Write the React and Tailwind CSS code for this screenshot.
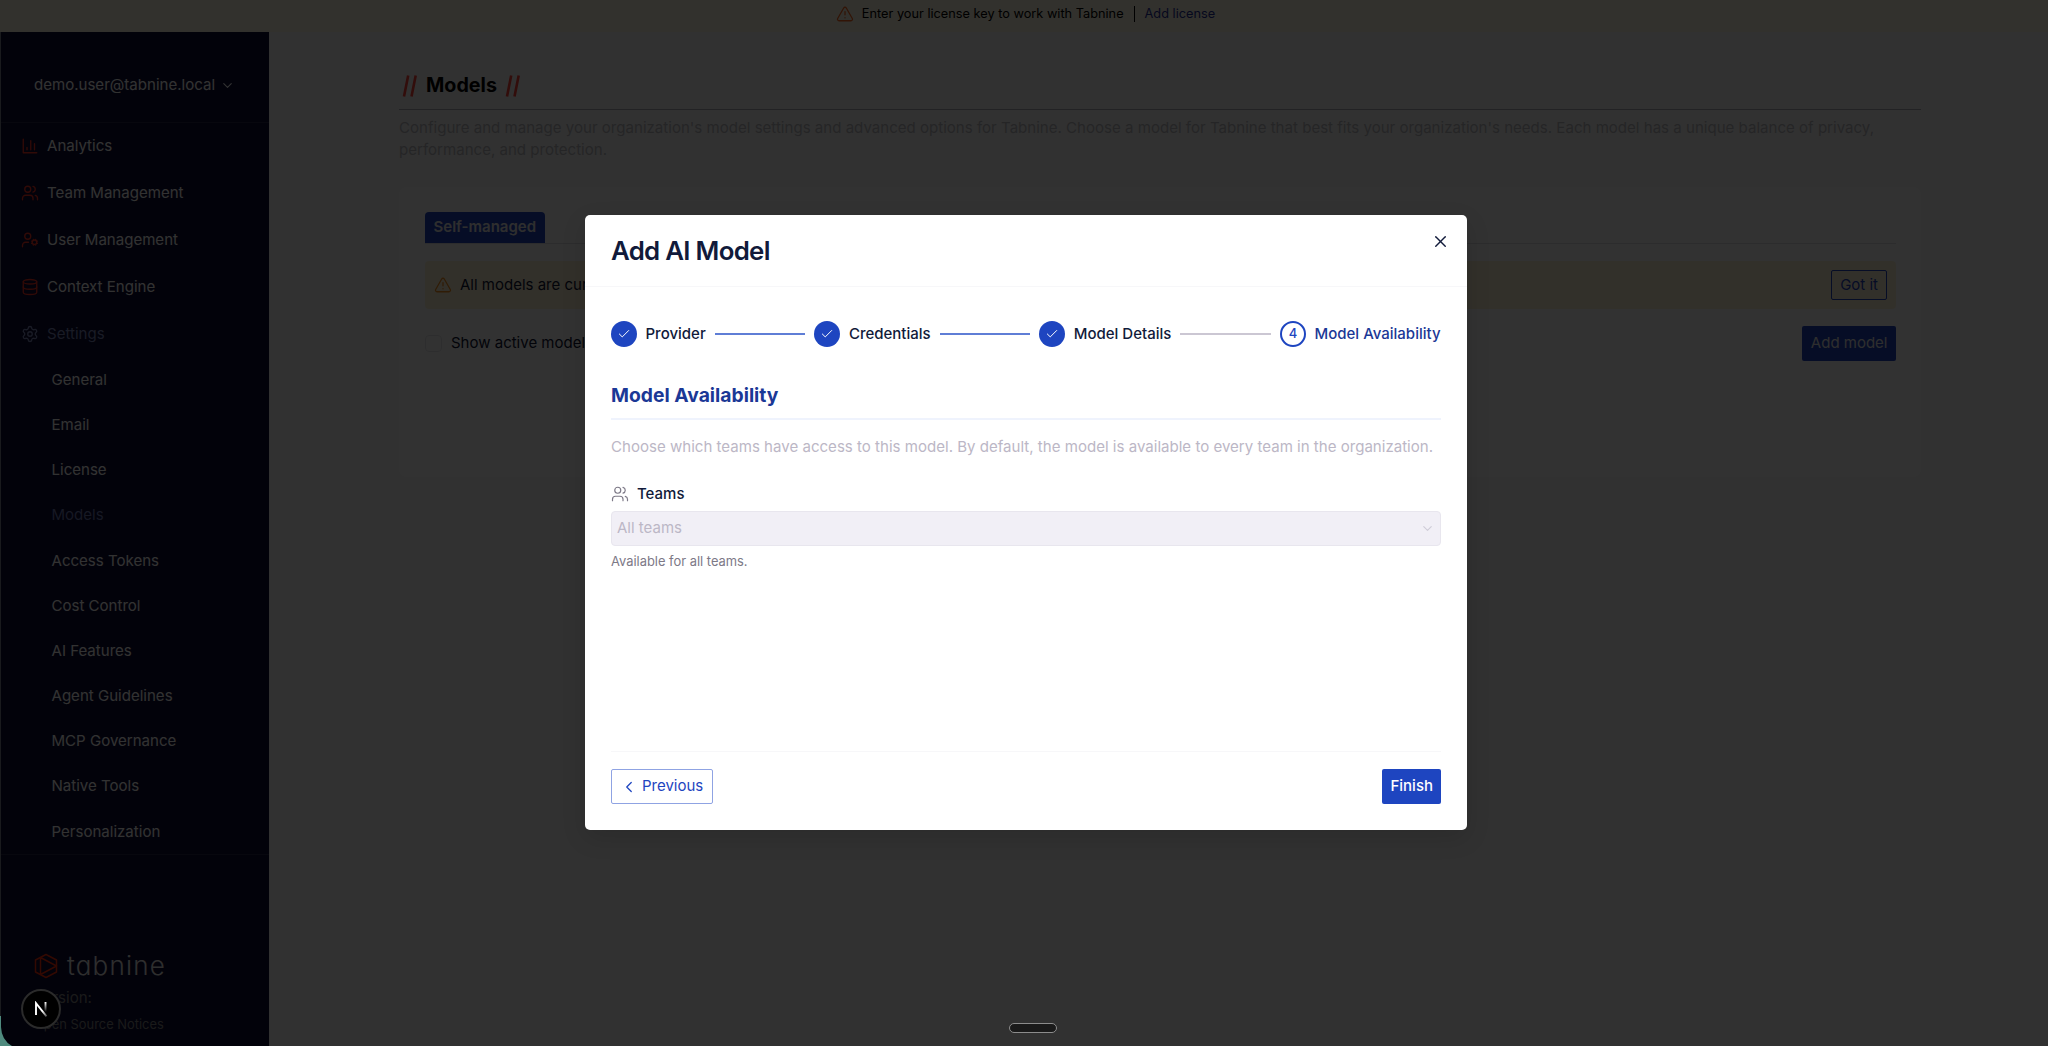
import React from "react";
import { AlertTriangle, Check, ChevronDown, ChevronLeft, Database, Settings, UserCog, Users, X } from "lucide-react";

const BarChartIcon = ({ size, strokeWidth, className }) => (
  <svg
    width={size}
    height={size}
    viewBox="0 0 24 24"
    fill="none"
    stroke="currentColor"
    strokeWidth={strokeWidth}
    strokeLinecap="round"
    strokeLinejoin="round"
    className={className}
  >
    <path d="M3 3v18h18" />
    <path d="M18 17V9M13 17V5M8 17v-3" />
  </svg>
);

const mainNav = [
  { label: "Analytics", icon: BarChartIcon },
  { label: "Team Management", icon: Users },
  { label: "User Management", icon: UserCog },
  { label: "Context Engine", icon: Database },
];

const settingsNav = [
  "General",
  "Email",
  "License",
  "Models",
  "Access Tokens",
  "Cost Control",
  "AI Features",
  "Agent Guidelines",
  "MCP Governance",
  "Native Tools",
  "Personalization",
];

const Logo = () => (
  <div className="flex items-center gap-[9px] text-[#e6e6e6]">
    <svg width="24" height="26" viewBox="0 0 24 26" fill="none" stroke="#fa2d0a" strokeWidth="1.5" strokeLinejoin="round">
      <path d="M12 1.5 22.5 7v12L12 24.5 1.5 19V7z" />
      <path d="M6.5 4.5v17M6.5 4.5 22.5 13 6.5 21.5" />
    </svg>
    <span className="font-light text-[26px] leading-[30px] tracking-[1.2px] [font-feature-settings:'cv11']">tabnine</span>
  </div>
);

const Sidebar = () => {
  return (
    <aside className="w-[269px] shrink-0 bg-[#0a0a32] text-[#fafafa] flex flex-col text-[15.06px] border-l border-[#7d8291]">
      <div className="h-[91px] shrink-0 pl-[33px] pt-[42px] flex items-start gap-[5px] border-b border-[#232346]">
        <span className="leading-[22px]">demo.user@tabnine.local</span>
        <ChevronDown size={15} strokeWidth={1.8} className="mt-1" />
      </div>
      <nav className="h-[732px] shrink-0 border-b border-[#232346]">
        {mainNav.map(({ label, icon: Icon }) => (
          <div key={label} className="h-[47px] pl-5 pb-px flex items-center gap-2">
            <Icon size={18} strokeWidth={1.8} className="text-[#f03223]" />
            <span>{label}</span>
          </div>
        ))}
        <div className="h-[47px] pl-5 pb-px flex items-center gap-2 text-[#7d87b9]">
          <Settings size={18} strokeWidth={1.8} />
          <span>Settings</span>
        </div>
        {settingsNav.map((item) => (
          <div
            key={item}
            className={
              item === "Models"
                ? "h-[45.2px] pl-[50.5px] pb-px flex items-center text-[#6e78af]"
                : "h-[45.2px] pl-[50.5px] pb-px flex items-center"
            }
          >
            {item}
          </div>
        ))}
      </nav>
      <div className="pl-[33px] pt-[96px] text-[#828282]">
        <Logo />
        <div className="mt-[6px] leading-[22px]">Version:</div>
        <div className="mt-[7px] text-[12.9px] leading-[18px]">Open Source Notices</div>
      </div>
    </aside>
  );
};

const Slashes = () => (
  <svg width="16" height="22" viewBox="0 0 16 22" stroke="#fa4137" strokeWidth="2.6">
    <path d="M2 21.5 6.2.5M9.5 21.5 13.7.5" />
  </svg>
);

const ModelsPage = () => {
  return (
    <main className="flex-1 bg-[#f5f5f5] pl-[130px] pr-[127px] pt-[41px] text-[15px]">
      <div className="h-[37px] flex items-start gap-2 pl-[3px] border-b border-[#aaaab4]">
        <div className="flex items-center gap-2 h-[26px]">
          <Slashes />
          <h1 className="text-[19.7px] font-bold text-black">Models</h1>
          <Slashes />
        </div>
      </div>
      <p className="mt-[7px] text-[15.07px] leading-[21.5px] text-[#b9b9be]">
        Configure and manage your organization's model settings and advanced options for Tabnine. Choose a model for
        Tabnine that best fits your organization's needs. Each model has a unique balance of privacy, performance, and
        protection.
      </p>
      <section className="mt-[27px] h-[290px] rounded-lg bg-[#fafafa] pl-[26px] pr-[25px] pt-[25px]">
        <div className="border-b border-[#dcdce1] flex">
          <div className="h-[31px] px-[8.5px] flex items-center rounded-t bg-[#1e41be] text-[#e6e6e6] font-semibold">
            Self-managed
          </div>
        </div>
        <div className="mt-[17px] h-[48px] rounded bg-[#faf0d2] flex items-center justify-between px-[9px] text-[#0f1432]">
          <div className="flex items-center gap-2">
            <AlertTriangle size={18} strokeWidth={1.7} className="text-[#f08c1e]" />
            <span>All models are currently available</span>
          </div>
          <button className="h-[30px] px-2 rounded-[2px] border border-[#1e41be] text-[#1e41be]">Got it</button>
        </div>
        <div className="mt-[17px] flex items-center justify-between text-[#0f1432]">
          <div className="flex items-center gap-[9px]">
            <span className="size-[17px] rounded border border-[#e1e1e6]" />
            <span>Show active models only</span>
          </div>
          <button className="h-[35px] px-[8.5px] rounded-[2px] bg-[#1e41be] text-[#e6e6e6]">Add model</button>
        </div>
      </section>
    </main>
  );
};

const Step = ({ label, number, active }) => (
  <div className="flex items-center gap-[8.5px] shrink-0">
    {active ? (
      <span className="size-[26px] rounded-full border-2 border-[#1e45c0] text-[#1e45c0] text-[13px] font-medium flex items-center justify-center">
        {number}
      </span>
    ) : (
      <span className="size-[26px] rounded-full bg-[#1e45c0] text-white flex items-center justify-center">
        <Check size={14} strokeWidth={1.7} />
      </span>
    )}
    <span className={active ? "font-medium text-[#1b3896]" : "font-medium text-[#111a3a]"}>{label}</span>
  </div>
);

const AddModelDialog = () => {
  return (
    <div className="w-[882px] h-[615px] mt-[215px] ml-[4px] rounded-[5px] bg-white shadow-[0_8px_24px_rgba(0,0,0,0.12)] flex flex-col text-[15px] text-[#111a3a]">
      <div className="h-[72px] shrink-0 pl-[26px] pr-[17px] border-b border-[#f7f7f9] flex justify-between">
        <h2 className="pt-[17px] text-[25.8px] leading-[38px] font-semibold tracking-[-0.7px]">Add AI Model</h2>
        <X size={19} strokeWidth={1.8} className="mt-[17px]" />
      </div>
      <div className="px-[26px] flex-1 flex flex-col">
        <div className="mt-[34px] mr-[0.5px] flex items-center gap-[9px]">
          <Step label="Provider" />
          <span className="h-[1.5px] flex-1 bg-[#5f7ed6]" />
          <Step label="Credentials" />
          <span className="h-[1.5px] flex-1 bg-[#5f7ed6]" />
          <Step label="Model Details" />
          <span className="h-[1.5px] flex-1 bg-[#cbc7d3]" />
          <Step label="Model Availability" number="4" active />
        </div>
        <h3 className="mt-[33px] pb-[8px] text-[19.3px] leading-[30px] font-bold text-[#1b3896] border-b-2 border-[#eff3fd]">
          Model Availability
        </h3>
        <p className="mt-4 text-[15.07px] leading-[22px] text-[#bcb7c6]">
          Choose which teams have access to this model. By default, the model is available to every team in the organization.
        </p>
        <div className="mt-[25px] flex items-center gap-2 leading-[22px] font-medium">
          <Users size={18} strokeWidth={1.6} className="text-[#7d7987]" />
          Teams
        </div>
        <div className="mt-[6px] h-[35px] pl-[5px] pr-[5px] pb-px rounded border border-[#e8e6ee] bg-[#f1eff6] flex items-center justify-between text-[#bcb7c6]">
          All teams
          <ChevronDown size={15} strokeWidth={1.8} className="text-[#cfccd8]" />
        </div>
        <div className="mt-[7px] text-[12.9px] leading-[18px] text-[#7d7987]">Available for all teams.</div>
        <div className="mt-auto h-[79px] border-t border-[#f7f7f9] pt-[17px] flex items-start justify-between">
          <button className="h-[35px] pl-2 pr-[9px] rounded-[2px] border border-[#8fa3e3] text-[#1e45c0] flex items-center gap-1">
            <ChevronLeft size={18} strokeWidth={1.7} />
            Previous
          </button>
          <button className="h-[35px] px-[8px] rounded-[2px] bg-[#1e45c0] text-white font-medium">Finish</button>
        </div>
      </div>
    </div>
  );
};

const DevBadge = () => (
  <div className="absolute left-[21px] bottom-[17px] size-10 rounded-full bg-black border-2 border-[#2b2b2b] flex items-center justify-center">
    <svg width="14" height="16" viewBox="0 0 14 16" fill="none" strokeWidth="1.9">
      <defs>
        <linearGradient id="badgeDiagonal" x1="2" y1="2" x2="13" y2="15" gradientUnits="userSpaceOnUse">
          <stop offset="0.6" stopColor="white" />
          <stop offset="1" stopColor="white" stopOpacity="0.3" />
        </linearGradient>
        <linearGradient id="badgeStem" x1="11.5" y1="1" x2="11.5" y2="11" gradientUnits="userSpaceOnUse">
          <stop stopColor="white" />
          <stop offset="1" stopColor="white" stopOpacity="0" />
        </linearGradient>
      </defs>
      <path d="M2 14V2.2L12.5 15.4" stroke="url(#badgeDiagonal)" />
      <path d="M11.5 1v10" stroke="url(#badgeStem)" />
    </svg>
  </div>
);

export default function App() {
  return (
    <div className="relative w-[2048px] h-[1046px] overflow-hidden bg-[#f5f5f5] font-[Inter,sans-serif] flex flex-col">
      <div className="h-[32px] shrink-0 bg-[#faf5e1] pl-[3px] pb-[5px] flex items-center justify-center text-[12.75px] text-black">
        <AlertTriangle size={18} strokeWidth={1.7} className="mr-2 text-[#fa641e]" />
        Enter your license key to work with Tabnine
        <span className="mx-[10px] h-4 w-px bg-black" />
        <a className="text-[#1e2d96]">Add license</a>
      </div>
      <div className="flex-1 flex min-h-0">
        <Sidebar />
        <ModelsPage />
      </div>

      <div className="absolute inset-0 bg-black/80 flex justify-center items-start">
        <AddModelDialog />
      </div>

      {/* desktop showing behind the rounded window corner */}
      <svg className="absolute left-0 bottom-0" width="12" height="30" viewBox="0 0 12 30">
        <path d="M0 0h1v11Q1.500 24 12 30H0z" fill="#4f8a7e" />
      </svg>
      <DevBadge />
      <div className="absolute left-[1009px] bottom-[13px] w-12 h-[10px] rounded-[5px] bg-[#1a1a1a] border border-[#8c8c8c]" />
    </div>
  );
}
